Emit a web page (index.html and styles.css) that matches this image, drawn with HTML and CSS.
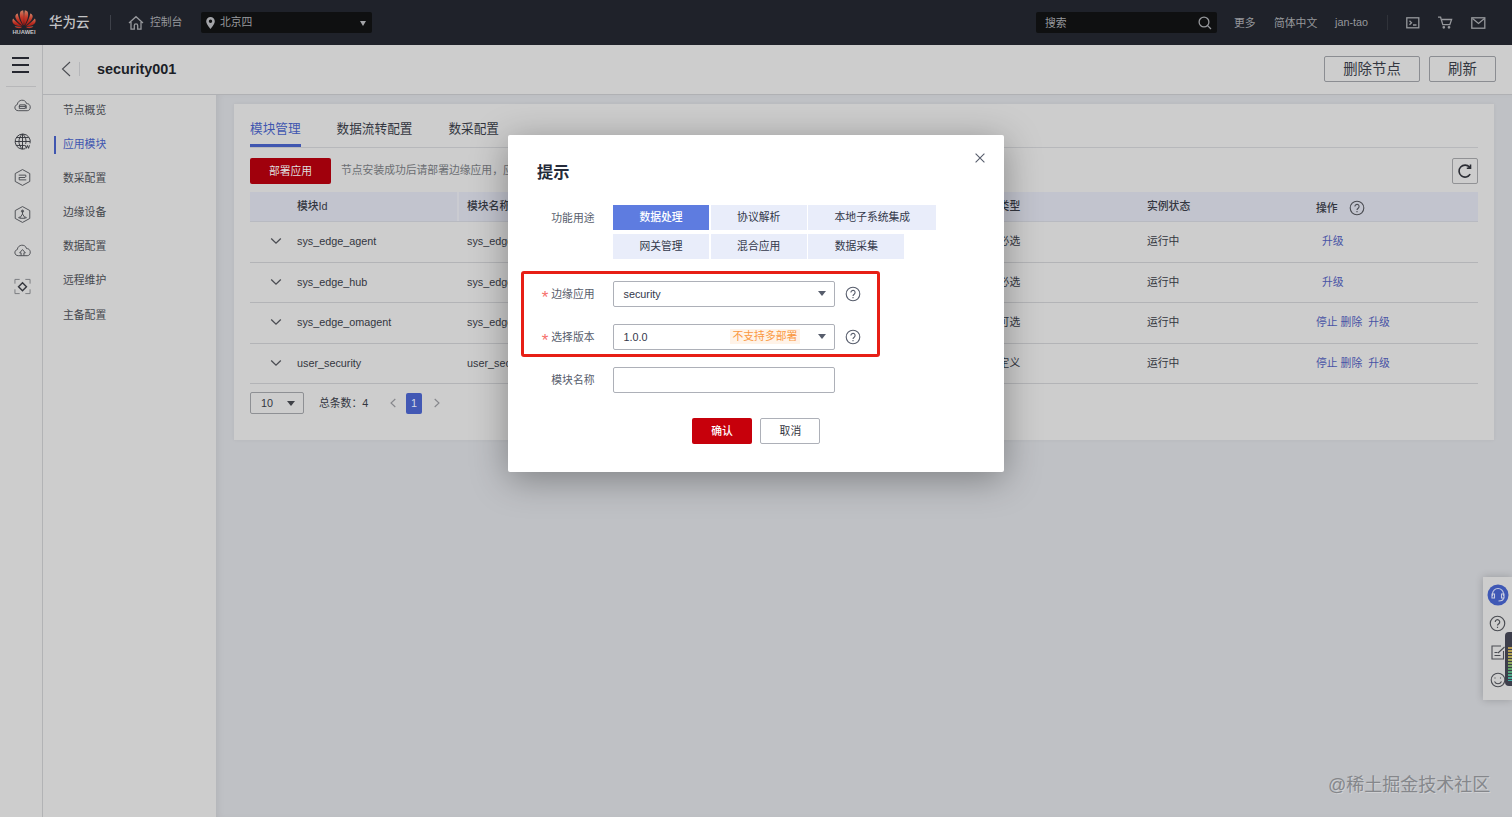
FILE: index.html
```html
<!DOCTYPE html>
<html lang="zh-CN">
<head>
<meta charset="utf-8">
<title>security001</title>
<link rel="stylesheet" href="styles.css">
</head>
<body>
<svg class="defs" width="0" height="0">
  <symbol id="help" viewBox="0 0 16 16"><circle cx="8" cy="8" r="6.8"/><path d="M5.9 6.5a2.1 2.1 0 1 1 3.3 1.7C8.300 8.800 8 9.100 8 9.900M8 11v1.200"/></symbol>
  <symbol id="chev" viewBox="0 0 12 8"><path d="M1.200 1.500 6 6.200l4.800-4.700"/></symbol>
</svg>
<header class="topbar">
  <div class="logo">
    <svg width="24" height="19" viewBox="0 0 24 19">
      <defs><linearGradient id="lg" x1="0" y1="0" x2="0" y2="1"><stop offset="0" stop-color="#cf8468"/><stop offset=".45" stop-color="#c43a2a"/><stop offset="1" stop-color="#a5140f"/></linearGradient></defs>
      <g fill="url(#lg)">
        <path d="M11.600 15.500C9.200 11.500 6.800 6 8.300 1.800 9 .8 10.200.3 11.200.2c.9 4 .9 10 .4 15.300z"/>
        <path d="M12.400 15.500c2.400-4 4.800-9.500 3.300-13.700C15 .8 13.800.3 12.800.2c-.9 4-.9 10-.4 15.300z"/>
        <path d="M11 15.800C7.500 13.800 3.200 9.800 3.300 6c.2-1.400 1.500-2.400 2.400-2.600.8 4.200 3 8.700 5.300 12.400z"/>
        <path d="M13 15.800c3.500-2 7.800-6 7.700-9.800-.2-1.400-1.500-2.400-2.400-2.600-.8 4.200-3 8.700-5.300 12.400z"/>
        <path d="M10.300 16.300C6.500 16.600 1.800 15 .6 12.200.1 10.800.6 9.300 1.100 8.600c2.500 3 6 6 9.200 7.700z"/>
        <path d="M13.700 16.300c3.800.3 8.500-1.300 9.700-4.100.5-1.400 0-2.900-.5-3.600-2.500 3-6 6-9.200 7.700z"/>
        <path d="M10.100 17c-2.200 1.500-5.100 2-7.500-.4z"/><path d="M13.900 17c2.200 1.500 5.100 2 7.500-.4z"/>
      </g>
    </svg>
    <span>HUAWEI</span>
  </div>
  <strong class="brand">华为云</strong>
  <i class="sep"></i>
  <svg class="home" width="16" height="16" viewBox="0 0 16 16"><path d="M1 8 8 1.700 15 8M3 7v7.200h3.300v-3.700c0-2.300 3.400-2.300 3.400 0v3.700H13V7"/></svg>
  <span class="console">控制台</span>
  <div class="region">
    <svg width="9" height="12" viewBox="0 0 9 12"><path fill-rule="evenodd" d="M4.500 0A4.300 4.300 0 0 0 .2 4.300C.2 7.300 4.500 12 4.500 12s4.300-4.700 4.300-7.700A4.300 4.300 0 0 0 4.500 0zm0 2.600a1.700 1.700 0 1 1 0 3.400 1.700 1.700 0 0 1 0-3.400z"/></svg>
    <span>北京四</span><i class="tri"></i>
  </div>
  <div class="search"><span>搜索</span>
    <svg width="14" height="14" viewBox="0 0 14 14"><circle cx="6" cy="6" r="4.900"/><path d="M9.600 9.600 13 13"/></svg>
  </div>
  <span class="more">更多</span>
  <span class="lang">简体中文</span>
  <span class="user">jan-tao</span>
  <i class="sep dark"></i>
  <div class="tools">
    <svg width="14" height="12" viewBox="0 0 14 12"><rect x=".8" y=".8" width="12" height="10"/><path d="M3.500 3.800 5.500 5.800l-2 2M7 8h3.500"/></svg>
    <svg width="15" height="13" viewBox="0 0 15 13"><path d="M0 1.200h2.600l2.200 7.500h7L13.600 3.500H4"/><circle cx="5.800" cy="11.300" r=".7"/><circle cx="11" cy="11.300" r=".7"/></svg>
    <svg width="15" height="12" viewBox="0 0 15 12"><rect x=".8" y=".8" width="13" height="10.400"/><path d="m1.500 1.500 6 5 6-5"/></svg>
  </div>
</header>

<div class="body">
  <nav class="rail">
    <div class="burger"><i></i><i></i><i></i></div>
    <div class="rail-icons">
      <svg viewBox="0 0 18 18"><path d="M4.500 14.500C.2 14.500-.3 9 3.500 8 4 2.500 12 1.600 13.300 7c5-.3 5.200 7.500.7 7.500zM6 8.300h6v3.800H5.500z"/><path d="M5 10h7M12 8.300l1 1v3"/></svg>
      <svg class="bold" viewBox="0 0 18 18"><path d="M12 16.600A8 8 0 1 1 17 11M1 9h16M2.500 4.800h13M2.500 13.200h9M9 1C4 5 4 13 9 17M9 1c3.500 3 4.300 7 3.300 10.500M9 1v16M12 13l1 3.200 1.200-3 1.200 3 1-3.200"/></svg>
      <svg viewBox="0 0 18 18"><path d="m9 .6 7.700 4.200v8.400L9 17.400l-7.700-4.200V4.800zM5 6.500h7.500v2M13 11.500H5.500v-2M5 9h7"/></svg>
      <svg viewBox="0 0 18 18"><path d="m9 .6 7.700 4.200v8.400L9 17.400l-7.700-4.200V4.800zM9 4.500v4M6 13l3-4.500 3 4.500zM4.500 12.500l2-1M13.500 12.500l-2-1"/><circle cx="9" cy="5.500" r="1.200"/></svg>
      <svg viewBox="0 0 18 18"><path d="M4.500 14.500C.2 14.500-.3 9 3.500 8 4 2.500 12 1.600 13.300 7c5-.3 5.200 7.500.7 7.500z"/><path d="M7.500 14.500v-3H6L9 8l3 3.500h-1.500v3"/></svg>
      <svg viewBox="0 0 18 18"><path class="faint" d="M1 6V1.500h5M12 1.500h5V6M17 12v4.500h-5M6 16.500H1V12"/><path class="heavy" d="m9 5 4.200 4.200L9 13.400 4.800 9.200z"/></svg>
    </div>
  </nav>
  <div class="main">
    <div class="titlebar">
      <svg width="10" height="16" viewBox="0 0 10 16"><path d="M9 1 1.500 8 9 15"/></svg>
      <i></i><h1>security001</h1>
      <button>删除节点</button><button class="sm">刷新</button>
    </div>
    <div class="content">
      <ul class="side">
        <li>节点概览</li><li class="on">应用模块</li><li>数采配置</li><li>边缘设备</li><li>数据配置</li><li>远程维护</li><li>主备配置</li>
      </ul>
      <div class="stage">
        <section class="card">
          <div class="tabs"><span class="on">模块管理</span><span>数据流转配置</span><span>数采配置</span></div>
          <div class="actions">
            <button class="deploy">部署应用</button>
            <span class="note">节点安装成功后请部署边缘应用，应用</span>
            <span class="reload"><svg width="16" height="16" viewBox="0 0 16 16"><path d="M13.200 11.200A6 6 0 1 1 12.600 4.200M13.500 1.500v3.800H9.800"/></svg></span>
          </div>
          <div class="table">
            <div class="tr th"><span></span><span>模块Id</span><span class="name">模块名称</span><span>应用类型</span><span>实例状态</span><span class="op">操作<svg class="help" width="16" height="16"><use href="#help"/></svg></span></div>
            <div class="tr"><svg class="chev"><use href="#chev"/></svg><span>sys_edge_agent</span><span class="name">sys_edge_agent</span><span>系统必选</span><span>运行中</span><span class="ops one"><a>升级</a></span></div>
            <div class="tr"><svg class="chev"><use href="#chev"/></svg><span>sys_edge_hub</span><span class="name">sys_edge_hub</span><span>系统必选</span><span>运行中</span><span class="ops one"><a>升级</a></span></div>
            <div class="tr"><svg class="chev"><use href="#chev"/></svg><span>sys_edge_omagent</span><span class="name">sys_edge_omagent</span><span>系统可选</span><span>运行中</span><span class="ops"><a>停止</a><a>删除</a><a>升级</a></span></div>
            <div class="tr"><svg class="chev"><use href="#chev"/></svg><span>user_security</span><span class="name">user_security</span><span>用户定义</span><span>运行中</span><span class="ops"><a>停止</a><a>删除</a><a>升级</a></span></div>
          </div>
          <div class="pager">
            <span class="size">10<i class="tri"></i></span><span class="total">总条数：4</span>
            <svg class="prev" width="6" height="10" viewBox="0 0 6 10"><path d="M5.300 1 1 5l4.300 4"/></svg>
            <b>1</b>
            <svg width="6" height="10" viewBox="0 0 6 10"><path d="M.7 1 5 5 .7 9"/></svg>
          </div>
        </section>
      </div>
    </div>
  </div>
</div>

<div class="modal">
  <svg class="close" width="10" height="10" viewBox="0 0 10 10"><path d="m.6.6 8.800 8.800M9.400.6.600 9.400"/></svg>
  <h2>提示</h2>
  <div class="row usage"><label>功能用途</label>
    <div class="chips"><span class="on">数据处理</span><span>协议解析</span><span class="wide">本地子系统集成</span><span>网关管理</span><span>混合应用</span><span>数据采集</span></div>
  </div>
  <div class="marked">
    <div class="row"><label><em>*</em>边缘应用</label><div class="field">security<i class="tri"></i></div><svg class="help" width="16" height="16"><use href="#help"/></svg></div>
    <div class="row"><label><em>*</em>选择版本</label><div class="field">1.0.0<mark>不支持多部署</mark><i class="tri"></i></div><svg class="help" width="16" height="16"><use href="#help"/></svg></div>
  </div>
  <div class="row last"><label>模块名称</label><div class="field"></div></div>
  <div class="foot"><button class="ok">确认</button><button>取消</button></div>
</div>

<aside class="dock">
  <svg width="22" height="22" viewBox="0 0 22 22"><circle cx="11" cy="11" r="10.500" fill="#3f58b5" stroke="none"/><path class="w" d="M5.500 12V10a5.500 5.500 0 0 1 11 0v2M5 10h2.500v4H5zM14.500 10H17v4h-2.500zM16.500 14c0 2-2 3-5 3"/></svg>
  <svg width="17" height="17"><use href="#help"/></svg>
  <svg class="edit" width="14" height="15" viewBox="0 0 14 15"><path d="M12.500 6v8H1V1h9M3.500 10.500h6M3.500 7.500h3M7 8l6.500-6"/></svg>
  <svg width="16" height="16" viewBox="0 0 16 16"><circle cx="8" cy="8" r="6.800"/><path d="M4.500 9.500c1.500 3 5.500 3 7 0M5 5.500v1M10.500 5.500v1"/></svg>
</aside>
<div class="meter"><i></i></div>
<div class="watermark">@稀土掘金技术社区</div>
</body>
</html>
```
FILE: styles.css
```css
* { box-sizing: border-box; }
body { margin: 0; width: 1512px; height: 817px; overflow: hidden; position: relative; display: flex; flex-direction: column; background: #bfc1c5; color: #33363f; font: 10.8px/16px "Liberation Sans", "Noto Sans CJK SC", sans-serif; }
svg { fill: none; stroke: #4a4c52; stroke-width: 1.1; flex: none; display: block; }
button { font: inherit; color: inherit; background: none; padding: 0; border: 1px solid #8b8d92; border-radius: 2px; flex: none; }
h1, h2, ul { margin: 0; padding: 0; list-style: none; }
.defs { position: absolute; }
.tri { width: 0; height: 0; border: 4px solid transparent; border-top: 5px solid #3f4147; border-bottom: 0; flex: none; }

.topbar { height: 45px; flex: none; background: #1f222a; color: #96989c; display: flex; align-items: center; }
.topbar > * { flex: none; }
.topbar svg { stroke: #96989c; stroke-width: 1.3; }
.logo { width: 26px; margin-left: 11px; display: flex; flex-direction: column; align-items: center; }
.topbar .logo svg { stroke: none; }
.logo span { font-size: 5.8px; font-weight: bold; line-height: 7px; color: #c4c4c6; }
.brand { margin-left: 12px; width: 61px; font-size: 13.5px; font-weight: 500; color: #c2c3c5; }
.sep { width: 1px; height: 15px; background: #3e4149; }
.home { margin-left: 17px; }
.console { margin-left: 6px; width: 51px; padding-bottom: 1px; }
.region { width: 171px; height: 21px; background: #0f1011; border-radius: 2px; display: flex; align-items: center; padding: 0 6px 0 5px; }
.topbar .region svg { fill: #a3a4a8; stroke: none; }
.region span { margin-left: 5px; flex: 1; padding-bottom: 1px; }
.region .tri { border-width: 5px 3.500px 0; border-top-color: #a3a4a8; margin-top: 2px; }
.search { width: 181px; height: 21px; margin-left: 664px; background: #0f1011; border-radius: 2px; display: flex; align-items: center; justify-content: space-between; padding: 0 5px 0 9px; }
.more { margin-left: 17px; width: 40px; }
.lang { width: 61px; }
.user { width: 52px; padding-bottom: 2px; }
.sep.dark { background: #30333a; }
.tools { display: flex; align-items: center; gap: 18px; margin-left: 18px; }

.body { flex: 1; display: flex; min-height: 0; }
.rail { width: 43px; flex: none; background: #cdcdcd; border-right: 1px solid #b2b3b5; }
.burger { margin: 0 6px; height: 42px; padding: 12px 7px 0 6px; border-bottom: 1px solid #b7b7b9; display: flex; flex-direction: column; gap: 5px; }
.burger i { height: 2px; background: #25272f; }
.rail-icons { display: flex; flex-direction: column; gap: 19.200px; padding: 10px 0 0 14px; }
.rail-icons svg { width: 17px; height: 17px; stroke-width: 1; }
.rail-icons .bold { stroke: #34363d; stroke-width: 1; }
.rail-icons .faint { stroke: #77797d; }
.rail-icons .heavy { stroke-width: 1.500; stroke: #34363d; }
.main { flex: 1; display: flex; flex-direction: column; min-width: 0; }
.titlebar { height: 50px; flex: none; background: #cdcdcd; border-bottom: 1px solid #b0b1b4; display: flex; align-items: center; padding: 0 16px 1px 18px; }
.titlebar i { width: 1px; height: 14px; background: #b5b6b9; margin-left: 8px; }
.titlebar h1 { flex: 1; margin-left: 17px; font-size: 14.400px; color: #1c1e27; }
.titlebar button { width: 96px; height: 26px; font-size: 14.400px; line-height: 22px; }
.titlebar .sm { width: 67px; margin-left: 9px; }
.content { flex: 1; display: flex; }
.side { width: 173px; flex: none; background: #cdcdcd; padding-top: 6.500px; }
.side li { height: 18px; margin: 0 0 16.200px 11px; padding-left: 7px; border-left: 2px solid transparent; line-height: 17px; color: #45474e; }
.side .on { color: #4056b0; border-color: #4056b0; }
.stage { flex: 1; padding: 9px 18px 0; box-shadow: inset 5px 0 8px -5px rgba(0,0,0,.1); min-width: 0; }
.card { height: 336px; background: #cdcdcd; padding: 11px 16px 0; box-shadow: 0 0 4px rgba(0,0,0,.05); }
.tabs { height: 33px; display: flex; gap: 36px; border-bottom: 1px solid #b7b8bb; font-size: 12.650px; line-height: 29px; }
.tabs span { height: 32px; }
.tabs .on { color: #4056b0; border-bottom: 3px solid #4056b0; }
.actions { display: flex; height: 44px; padding-top: 10px; }
.deploy { width: 81px; height: 26px; background: #a0000c; border: 0; color: #dedede; }
.note { margin-left: 10px; line-height: 24px; color: #6b6d72; flex: 1; }
.reload { width: 26px; height: 26px; border: 1px solid #919295; border-radius: 2px; padding: 4px; }
.reload svg { stroke: #2b2d34; stroke-width: 1.600; }
.tr { display: grid; grid-template-columns: 47px 160px 520px 170px 169px 1fr; align-items: center; height: 40.600px; border-bottom: 1px solid #b3b4b7; padding-bottom: 1px; }
.th { height: 30px; padding: 0; background: #c2c4ce; font-weight: 500; border-color: #b8bac1; }
.th > span { height: 29px; line-height: 28px; }
.th .name { border-left: 2px solid #cacbd1; padding-left: 8px; }
.name { padding-left: 10px; }
.tr .op { display: flex; align-items: center; padding-top: 3px; }
.help { margin-left: 11px; }
.chev { width: 12px; height: 8px; margin-left: 20px; stroke-width: 1.300; }
.ops { color: #4853a5; display: flex; }
.ops a:nth-child(2) { margin: 0 6px 0 3px; }
.one { padding-left: 6px; }
.pager { display: flex; align-items: center; padding-top: 8px; }
.size { width: 54px; height: 22px; border: 1px solid #8e9094; border-radius: 2px; display: flex; align-items: center; justify-content: space-between; padding: 0 8px 0 10px; }
.total { margin-left: 15px; width: 71px; }
.pager svg { stroke: #85868b; }
.pager b { width: 16px; height: 21px; margin: 0 12px 0 10px; background: #4258b4; border-radius: 2px; color: #d5d8e5; font-weight: normal; line-height: 21px; text-align: center; }

.modal { position: absolute; left: 508px; top: 135px; width: 496px; height: 337px; background: #fff; border-radius: 2px; box-shadow: 0 7px 36px rgba(0,0,0,.34); padding: 26px 13px 0; }
.modal svg { stroke: #575d6c; }
.close { position: absolute; right: 19px; top: 18px; }
.modal h2 { margin-left: 16px; font-size: 16.200px; line-height: 22px; color: #252b3a; }
.row { display: flex; align-items: center; }
.row label { width: 73.500px; margin-right: 18.500px; text-align: right; color: #575d6c; flex: none; }
.usage { margin-top: 22px; align-items: flex-start; }
.usage label { line-height: 26px; }
.chips { display: flex; flex-wrap: wrap; gap: 4px 1.700px; width: 330px; }
.chips span { width: 96px; height: 25px; background: #e9edfa; line-height: 25px; text-align: center; color: #33384a; }
.chips .on { background: #5e7ce0; color: #fff; font-weight: 500; }
.chips .wide { width: 128px; }
.marked { width: 359px; height: 86px; margin-top: 12px; border: 3px solid #e71f16; border-radius: 3px; padding: 6.500px 0 0; display: flex; flex-direction: column; gap: 17px; }
.marked .row { margin-left: -3px; }
.marked em { color: #f66f6a; font-style: normal; font-size: 17px; line-height: 8px; vertical-align: -5px; margin-right: 3px; }
.field { width: 222px; height: 26px; margin-left: -.5px; border: 1px solid #adb0b8; border-radius: 2px; padding: 0 8px 0 10px; display: flex; align-items: center; color: #33384a; flex: none; }
.marked .help { margin-left: 10px; }
.field .tri { margin-left: auto; border-top-color: #575d6c; }
.field mark { margin-left: 82px; padding: 0 3px; line-height: 15px; background: #fff3e8; color: #fa9841; }
.last { margin-top: 10px; }
.foot { display: flex; gap: 8.400px; margin: 25px 0 0 171px; }
.foot button { width: 60px; height: 26px; border-color: #adb0b8; }
.foot .ok { background: #c7000b; border: 0; color: #fff; font-weight: 500; }

.dock { position: absolute; right: 0; top: 577px; width: 29px; height: 123px; background: #cdcdcd; box-shadow: 0 0 8px rgba(0,0,0,.2); padding-top: 7px; display: flex; flex-direction: column; align-items: center; gap: 9px; }
.dock svg:last-child { margin-top: 3px; }
.dock .edit { margin-top: 4px; }
.dock .w { stroke: #c6cbe0; }
.meter { position: absolute; right: 0; top: 632px; width: 7px; height: 54px; background: #3d3e4b; border-radius: 4px 0 0 4px; padding: 15px 0 0 3px; }
.meter i { display: block; height: 34px; background: repeating-linear-gradient(#0000 0 2px, #3d3e4b 2px 3px), linear-gradient(#b99b52, #a8a653 35%, #5ca469 65%, #3fa9a5); }
.watermark { position: absolute; left: 1328px; top: 772px; font-size: 18px; line-height: 26px; color: #85878b; white-space: nowrap; text-shadow: 1px 1px 0 #d0d1d4; }
```
